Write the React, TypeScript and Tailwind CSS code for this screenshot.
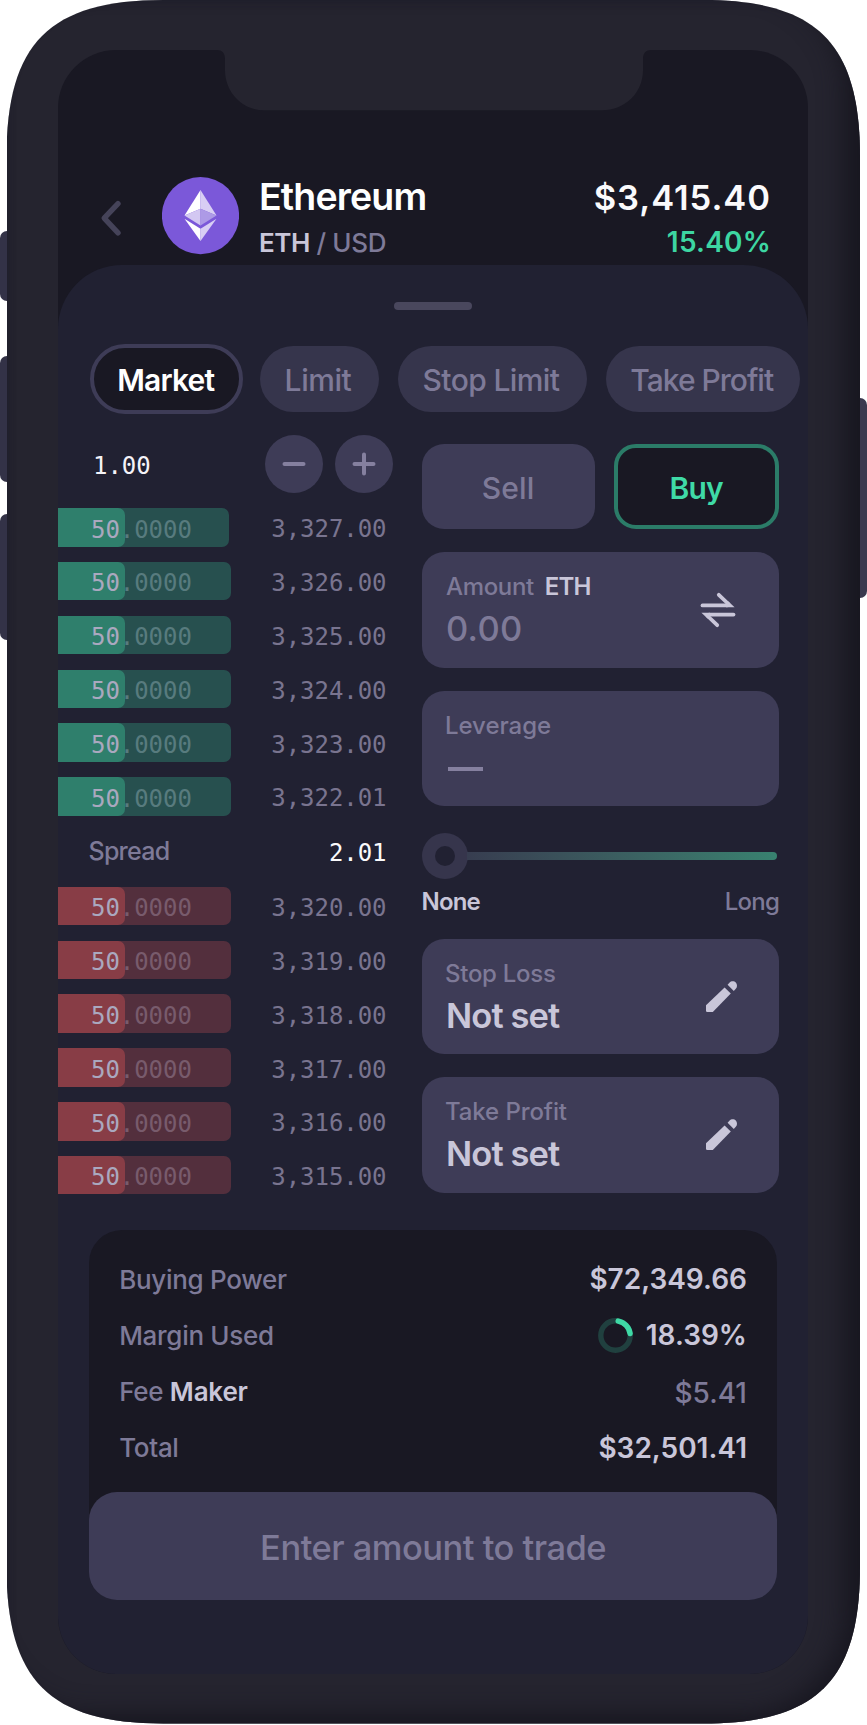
import React from 'react';

type Side = 'ask' | 'bid';

const asks = ['3,327.00', '3,326.00', '3,325.00', '3,324.00', '3,323.00', '3,322.01'];
const bids = ['3,320.00', '3,319.00', '3,318.00', '3,317.00', '3,316.00', '3,315.00'];

function ChevronLeft() {
  return (
    <svg className="h-10 w-6" viewBox="0 0 24 40" fill="none">
      <path d="M18 5.6 4.2 20.2 18 34.8" stroke="#454359" strokeWidth="5.4" strokeLinecap="round" strokeLinejoin="round" />
    </svg>
  );
}

function EthereumLogo() {
  return (
    <svg className="size-[77.5px]" viewBox="0 0 77.5 77.5">
      <circle cx="38.5" cy="38.6" r="38.6" fill="#7b58d9" />
      <path d="M38.5 13 22.5 38.6 38.5 31.8Z" fill="#fff" />
      <path d="M38.5 13 54.5 38.6 38.5 31.8Z" fill="#d8cef4" />
      <path d="M22.5 38.6 38.5 31.8V48.6Z" fill="#d3c8f2" />
      <path d="M54.5 38.6 38.5 31.8V48.6Z" fill="#ad9ae6" />
      <path d="M22.5 41.8 38.5 51.8V64Z" fill="#fff" />
      <path d="M54.5 41.8 38.5 51.8V64Z" fill="#d8cef4" />
    </svg>
  );
}

function SwapIcon() {
  return (
    <svg className="h-9 w-9" viewBox="0 0 36 36" fill="none" stroke="#c9c6d9" strokeWidth="3.8" strokeLinecap="round">
      <path d="M2.5 13.4H27" />
      <path d="M18.8 2.8 28.4 12" />
      <path d="M28.2 9.2 34.6 15.3H26Z" fill="#c9c6d9" stroke="none" />
      <path d="M33.5 22.6H9" />
      <path d="M17.2 33.2 7.6 24" />
      <path d="M7.8 26.8 1.4 20.7H10Z" fill="#c9c6d9" stroke="none" />
    </svg>
  );
}

function PencilIcon() {
  return (
    <svg className="size-[31px]" viewBox="0 0 31 31" fill="#c9c6d9">
      <path d="M0 24.3 18.6 6.4 24.8 12.6 6.8 31H1.2Q0 31 0 29.8Z" />
      <path d="M21.6 3.8 23.4 1.8C25.4 -.4 28.4 0 29.8 1.6C31.4 3.2 31.4 6 29.8 7.8L27.8 10Z" />
    </svg>
  );
}

function MarginRing() {
  return (
    <svg className="size-[35px]" viewBox="0 0 35 35" fill="none" strokeWidth="5.4">
      <circle cx="17.5" cy="17.5" r="14.7" stroke="#20403f" />
      <path d="M20.2 3.1A14.7 14.7 0 0 1 32.1 15.5" stroke="#3fdaa6" strokeLinecap="round" />
    </svg>
  );
}

function Notch() {
  return (
    <svg className="absolute top-0 left-[159px] h-[61px] w-[434px]" viewBox="0 0 434 61">
      <path d="M0 0C5 0 8 3 8 9V20C8 43 26 60.3 47 60.3H385C408 60.3 426 43 426 20V9C426 3 429 0 434 0Z" fill="#25242f" />
    </svg>
  );
}

function OrderRow({ side, price, short }: { side: Side; price: string; short?: boolean }) {
  const track = side === 'ask' ? 'bg-[#27504f]' : 'bg-[#532f3d]';
  const fill = side === 'ask' ? 'bg-[#2f7f6c]' : 'bg-[#883d46]';
  const rest = side === 'ask' ? 'text-[#587b7e]' : 'text-[#785b6c]';
  return (
    <div className="flex h-[38.5px] items-center justify-between">
      <div className={`flex h-full rounded-r-[7px] ${track} ${short ? 'w-[171px]' : 'w-[173px]'}`}>
        <div className={`h-full w-[67px] rounded-r-[7px] pt-[2.5px] pl-[33px] leading-[38px] whitespace-nowrap ${fill}`}>
          <span className="text-[#aaa8bf]">50</span>
          <span className={rest}>.0000</span>
        </div>
      </div>
      <span className="pt-[4px] leading-[38px] text-[#79748f]">{price}</span>
    </div>
  );
}

function Card({ label, children, icon }: { label: React.ReactNode; children: React.ReactNode; icon?: React.ReactNode }) {
  return (
    <div className="flex h-[115.5px] items-start justify-between rounded-[22px] bg-[#3e3c57] pt-[13px] pl-[23.5px]">
      <div>
        <div className="text-[24px] leading-[44px] text-[#7e7a98]">{label}</div>
        <div className="text-[34.5px] leading-10">{children}</div>
      </div>
      {icon}
    </div>
  );
}

function SummaryRow({ label, children }: { label: React.ReactNode; children: React.ReactNode }) {
  return (
    <div className="flex h-[56.3px] items-center justify-between">
      <div className="text-[26px] tracking-[-0.3px] text-[#7e7a98]">{label}</div>
      <div className="flex items-center text-[28px] font-semibold tracking-[0px] text-[#c9c6d9]">{children}</div>
    </div>
  );
}

export default function App() {
  return (
    <div className="relative h-[1725px] w-[867px] overflow-hidden bg-white font-['Inter',sans-serif] font-medium">
      <div className="absolute top-[231px] left-0 h-[70px] w-3 rounded-l-[7px] bg-[#333247]" />
      <div className="absolute top-[355.5px] left-0 h-[126px] w-3 rounded-l-[7px] bg-[#333247]" />
      <div className="absolute top-[513.5px] left-0 h-[126px] w-3 rounded-l-[7px] bg-[#333247]" />
      <div className="absolute top-[398px] left-[855px] h-[200px] w-[12px] rounded-r-[7px] bg-[#3a394f]" />

      <div className="relative ml-[6.5px] h-[1723.5px] w-[853.5px] rounded-[100px] bg-[#25242f] pt-[50px] pl-[51.5px] shadow-[inset_-18px_-12px_24px_-2px_#181720,inset_0_0_8px_#1f1f2d] [clip-path:path('M0_157C0_43_43_0_157_0H696.5C810.5_0_853.5_43_853.5_157V1566.5C853.5_1680.5_810.5_1723.5_696.5_1723.5H157C43_1723.5_0_1680.5_0_1566.5Z')]">
        <div className="relative flex h-[1624px] w-[750px] flex-col overflow-hidden rounded-[58px] bg-[#191823]">
          <Notch />

          <header className="mt-[123px] flex h-[92px] shrink-0 items-start pr-[37px] pl-[42px]">
            <div className="pt-[25px]">
              <ChevronLeft />
            </div>
            <div className="ml-[37.5px] pt-1">
              <EthereumLogo />
            </div>
            <div className="ml-5 flex-1">
              <div className="pt-px text-[37.5px] leading-[46px] font-semibold tracking-[-0.85px] text-white">Ethereum</div>
              <div className="text-[26px] leading-[46px] tracking-[-0.3px] text-[#7e7a98]">
                <span className="font-semibold tracking-[-0.5px] text-[#c9c6d9]">ETH</span> / USD
              </div>
            </div>
            <div className="pt-[2px] text-right font-semibold">
              <div className="text-[34.5px] leading-[46px] tracking-[0.95px] text-[#fafafc]">$3,415.40</div>
              <div className="-mt-px text-[28px] leading-[44px] tracking-[0.2px] text-[#3dd6a2]">15.40%</div>
            </div>
          </header>

          <main className="flex-1 rounded-t-[64px] bg-[#212132] pt-[37px]">
            <div className="mx-auto h-2 w-[78px] rounded-full bg-[#49475d]" />

            <nav className="mt-[34px] ml-[32px] flex h-[70px] items-center text-[30px] text-[#7e7a98]">
              <button className="h-[70px] w-[152.5px] shrink-0 rounded-full border-4 border-[#3e3c57] bg-[#191823] pt-[3px] pr-px font-semibold tracking-[-0.8px] text-white">Market</button>
              <button className="ml-[17px] h-[66px] w-[119px] shrink-0 rounded-full bg-[#36354c] pt-[3px] pr-0.5 tracking-[-0.43px]">Limit</button>
              <button className="ml-[19px] h-[66px] w-[189px] shrink-0 rounded-full bg-[#36354c] pt-[3px] pr-0.5 tracking-[-0.6px]">Stop Limit</button>
              <button className="ml-[19px] h-[66px] w-[194.5px] shrink-0 rounded-full bg-[#36354c] pt-[3px] pr-0.5 tracking-[-1px]">Take Profit</button>
            </nav>

            <div className="flex items-start">
              <section className="mt-[21px] w-[328.5px] font-['DejaVu_Sans_Mono',monospace] text-[24px] font-normal tracking-[-0.05px]">
                <div className="-mr-[6px] flex h-[58px] items-center pl-[35px]">
                  <span className="pt-1 text-[#f4f3f8]">1.00</span>
                  <button className="ml-auto grid size-[58px] place-items-center rounded-full bg-[#3e3c57]">
                    <svg className="size-6" viewBox="0 0 24 24" stroke="#85809f" strokeWidth="4" strokeLinecap="round">
                      <path d="M2.5 12H21.5" />
                    </svg>
                  </button>
                  <button className="ml-[11.5px] grid size-[58px] place-items-center rounded-full bg-[#3e3c57]">
                    <svg className="size-6" viewBox="0 0 24 24" stroke="#85809f" strokeWidth="4" strokeLinecap="round">
                      <path d="M2.5 12H21.5M12 2.5V21.5" />
                    </svg>
                  </button>
                </div>

                <div className="mt-[15px] flex flex-col gap-[15.35px]">
                  {asks.map((price, i) => (
                    <OrderRow key={price} side="ask" price={price} short={i === 0} />
                  ))}
                </div>

                <div className="flex h-[71px] items-center justify-between pl-[30.5px]">
                  <span className="pt-[2px] font-['Inter',sans-serif] text-[25px] font-medium tracking-[-0.75px] text-[#7e7a98]">Spread</span>
                  <span className="pt-[4px] text-[#fafafc]">2.01</span>
                </div>

                <div className="flex flex-col gap-[15.35px]">
                  {bids.map((price) => (
                    <OrderRow key={price} side="bid" price={price} />
                  ))}
                </div>
              </section>

              <section className="mt-[30px] ml-[35px] w-[357.5px]">
                <div className="flex justify-between text-[30px]">
                  <button className="h-[85px] w-[173px] rounded-[22px] bg-[#3e3c57] pt-[3px] tracking-[0.15px] text-[#7e7a98]">Sell</button>
                  <button className="h-[85px] w-[165.5px] rounded-[22px] border-4 border-[#2b7c68] bg-[#191823] pt-[3px] font-semibold tracking-[-0.8px] text-[#3fdaa6]">Buy</button>
                </div>

                <div className="mt-[23px] flex flex-col gap-[23px]">
                  <Card
                    label={
                      <div className="flex gap-[11px] pl-px">
                        <span className="tracking-[-0.34px]">Amount</span>
                        <span className="font-semibold tracking-[-0.9px] text-[#c9c6d9]">ETH</span>
                      </div>
                    }
                    icon={<div className="pt-[27px] pr-[43.5px]"><SwapIcon /></div>}
                  >
                    <span className="pl-px tracking-[0.28px] text-[#7e7a98]">0.00</span>
                  </Card>
                  <Card label={<span className="tracking-[-0.05px]">Leverage</span>}>
                    <div className="mt-[19px] ml-[3px] h-[4px] w-[35px] bg-[#85809f]" />
                  </Card>
                </div>

                <div className="mt-[26.5px] flex h-[46.5px] items-center">
                  <div className="grid size-[46.5px] shrink-0 place-items-center rounded-full bg-[#36354c]">
                    <div className="size-[19.5px] rounded-full bg-[#212132]" />
                  </div>
                  <div className="mr-[2px] -ml-px h-2 flex-1 rounded-r-full bg-linear-to-r from-[#373d50] to-[#388270]" />
                </div>
                <div className="flex justify-between pt-px text-[24px] leading-[44px] text-[#7e7a98]">
                  <span className="font-semibold tracking-[-0.8px] text-[#c9c6d9]">None</span>
                  <span className="tracking-[-0.8px]">Long</span>
                </div>

                <div className="mt-[14.5px] flex flex-col gap-[23px]">
                  <Card label={<span className="tracking-[-0.27px]">Stop Loss</span>} icon={<div className="pt-[29px] pr-[42px]"><PencilIcon /></div>}>
                    <span className="pl-px font-semibold tracking-[-0.9px] text-[#c9c6d9]">Not set</span>
                  </Card>
                  <Card label={<span className="tracking-[-0.1px]">Take Profit</span>} icon={<div className="pt-[29px] pr-[42px]"><PencilIcon /></div>}>
                    <span className="pl-px font-semibold tracking-[-0.9px] text-[#c9c6d9]">Not set</span>
                  </Card>
                </div>
              </section>
            </div>

            <footer className="mt-[36px] ml-[30.7px] w-[688.8px]">
              <div className="h-[290px] rounded-t-[33px] bg-[#191823] pt-[20.5px] pr-[30.5px] pl-[30.5px]">
                <SummaryRow label="Buying Power">$72,349.66</SummaryRow>
                <SummaryRow label="Margin Used">
                  <MarginRing />
                  <span className="ml-[13px]">18.39%</span>
                </SummaryRow>
                <SummaryRow label={<>Fee <span className="font-semibold tracking-[-0.2px] text-[#c9c6d9]">Maker</span></>}>
                  <span className="pt-[2px] font-medium text-[#7e7a98]">$5.41</span>
                </SummaryRow>
                <SummaryRow label="Total">$32,501.41</SummaryRow>
              </div>
              <button className="-mt-7 h-[108px] w-full rounded-[28px] bg-[#3e3c57] pt-[3px] text-[34.5px] tracking-[-0.52px] text-[#7e7a98]">Enter amount to trade</button>
            </footer>
          </main>
        </div>
      </div>
    </div>
  );
}
